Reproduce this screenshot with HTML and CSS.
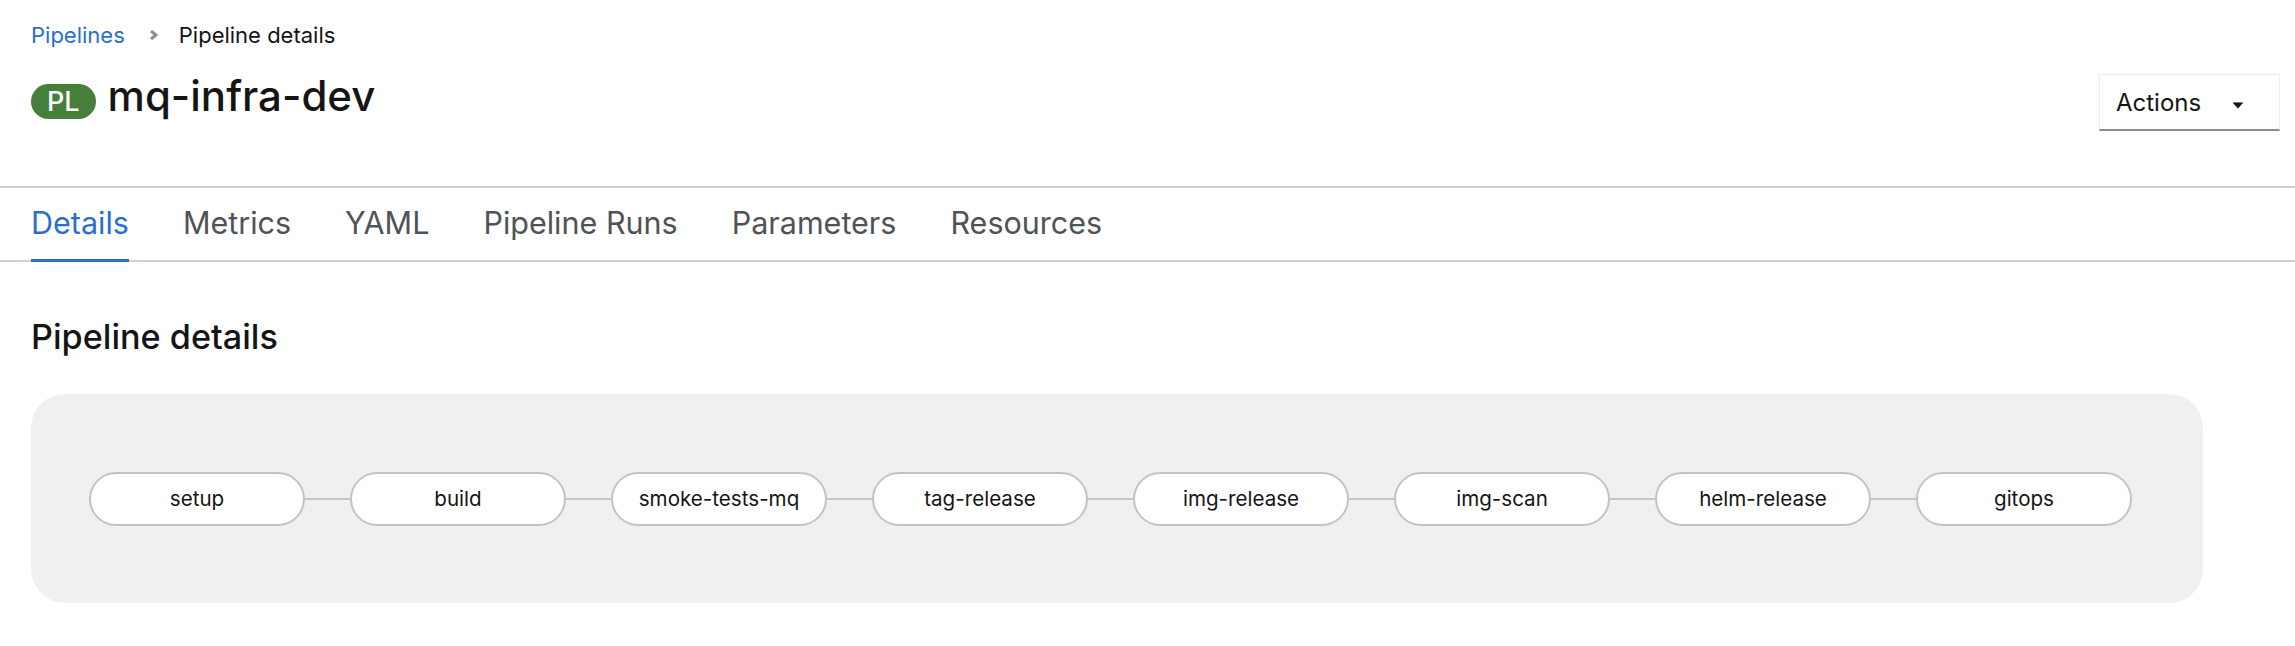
FILE: index.html
```html
<!DOCTYPE html>
<html lang="en">
<head>
<meta charset="utf-8">
<title>mq-infra-dev · Pipeline details</title>
<link rel="stylesheet" href="styles.css">
</head>
<body>
<header class="page-header">
  <div class="header-main">
    <nav class="breadcrumb">
      <a class="crumb-link" href="#">Pipelines</a>
      <svg class="crumb-sep" width="9" height="10" viewBox="0 0 9 10"><polyline points="2,1 7,5 2,9" fill="none" stroke="#8a8d90" stroke-width="3" stroke-linejoin="miter"/></svg>
      <span class="crumb-current">Pipeline details</span>
    </nav>
    <div class="title-row">
      <span class="badge">PL</span>
      <h1 class="title">mq-infra-dev</h1>
    </div>
  </div>
  <button class="actions">
    <span>Actions</span>
    <svg class="caret" width="12" height="7" viewBox="0 0 12 7"><polygon points="0,0 12,0 6,7" fill="#151515" stroke="#151515" stroke-width="0.6" stroke-linejoin="round"/></svg>
  </button>
</header>

<nav class="tabs">
  <a class="tab active" href="#">Details</a>
  <a class="tab" href="#">Metrics</a>
  <a class="tab" href="#">YAML</a>
  <a class="tab" href="#">Pipeline Runs</a>
  <a class="tab" href="#">Parameters</a>
  <a class="tab" href="#">Resources</a>
</nav>

<main class="content">
  <h2 class="section-title">Pipeline details</h2>
  <div class="canvas">
    <div class="pill">setup</div>
    <div class="edge"></div>
    <div class="pill">build</div>
    <div class="edge"></div>
    <div class="pill">smoke-tests-mq</div>
    <div class="edge"></div>
    <div class="pill">tag-release</div>
    <div class="edge"></div>
    <div class="pill">img-release</div>
    <div class="edge"></div>
    <div class="pill">img-scan</div>
    <div class="edge"></div>
    <div class="pill">helm-release</div>
    <div class="edge"></div>
    <div class="pill">gitops</div>
  </div>
</main>
</body>
</html>
```

FILE: styles.css
```css
* { box-sizing: border-box; }

html, body {
  margin: 0;
  padding: 0;
  background: #ffffff;
  color: #151515;
  font-family: Inter, "Open Sans", "Liberation Sans", sans-serif;
}

.page-header {
  display: flex;
  justify-content: space-between;
  align-items: flex-start;
  padding: 20px 15px 55px 31px;
  border-bottom: 2px solid #d2d2d2;
}

.breadcrumb {
  display: flex;
  align-items: center;
  height: 30px;
  font-size: 22px;
  line-height: 30px;
}

.crumb-link {
  color: #2a6fce;
  text-decoration: none;
}

.crumb-sep {
  margin: 0 21px 0 24px;
}

.crumb-current {
  color: #151515;
}

.title-row {
  display: flex;
  align-items: baseline;
  gap: 12px;
  margin-top: 20px;
  height: 52px;
}

.badge {
  display: inline-block;
  height: 35px;
  line-height: 35px;
  padding: 0 16px;
  border-radius: 18px;
  background: #467f3a;
  color: #ffffff;
  font-size: 27px;
  font-weight: 500;
}

.title {
  margin: 0;
  font-size: 42px;
  line-height: 52px;
  font-weight: 500;
}

.actions {
  display: flex;
  align-items: center;
  gap: 32px;
  width: 181px;
  height: 57px;
  margin-top: 54px;
  padding: 0 36px 0 16px;
  background: #ffffff;
  border: 1px solid #ececec;
  border-bottom: 2px solid #8a8d90;
  font-family: inherit;
  font-size: 24px;
  color: #151515;
}

.caret {
  margin-top: 7px;
}

.tabs {
  display: flex;
  gap: 54px;
  padding: 0 0 0 31px;
  border-bottom: 2px solid #d2d2d2;
}

.tab {
  display: block;
  padding: 17px 0 18px;
  margin-bottom: -2px;
  font-size: 30.5px;
  line-height: 36px;
  color: #4f5358;
  text-decoration: none;
  border-bottom: 3px solid transparent;
}

.tab.active {
  color: #2a6fce;
  border-bottom-color: #2a6fce;
}

.content {
  padding: 54px 92px 0 31px;
}

.section-title {
  margin: 0;
  font-size: 34.2px;
  line-height: 42px;
  font-weight: 500;
}

.canvas {
  display: flex;
  align-items: center;
  margin-top: 36px;
  height: 209px;
  padding: 0 0 0 58px;
  background: #f0f0f0;
  border-radius: 34px;
}

.pill {
  flex: 0 0 216px;
  height: 54px;
  display: flex;
  align-items: center;
  justify-content: center;
  background: #ffffff;
  border: 2px solid #c2c3c5;
  border-radius: 27px;
  font-size: 20.6px;
  color: #151515;
}

.edge {
  flex: 0 0 45px;
  height: 2px;
  background: #c6c7c8;
}
```
